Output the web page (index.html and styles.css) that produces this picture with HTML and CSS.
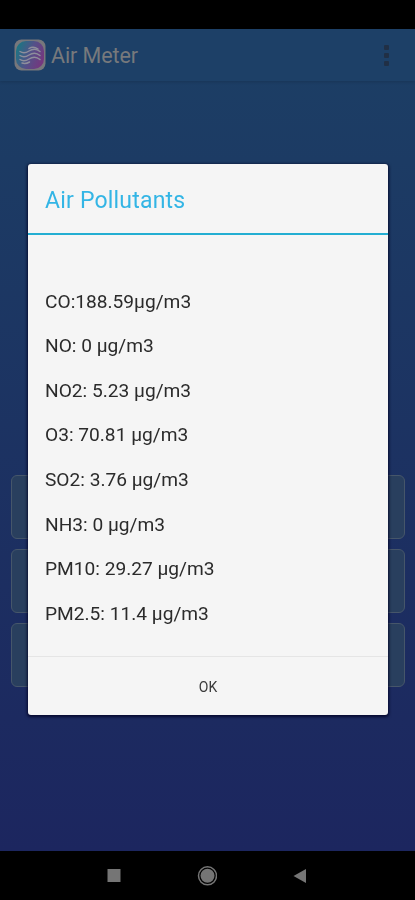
FILE: index.html
```html
<!DOCTYPE html>
<html lang="en">
<head>
    <meta charset="UTF-8">
    <meta name="viewport" content="width=device-width, initial-scale=1.0">
    <title>Air Meter</title>
    <link rel="stylesheet" href="styles.css">
</head>
<body>
    <div class="status-bar"></div>

    <!-- App Screen -->
    <div class="app">
        <header class="app-bar">
            <svg class="logo" viewBox="0 0 32 32">
                <defs>
                    <linearGradient id="logo-fill" x1="0" y1="0.3" x2="1" y2="0.7">
                        <stop offset="0" stop-color="#1c7583"/>
                        <stop offset="0.5" stop-color="#545088"/>
                        <stop offset="1" stop-color="#77357e"/>
                    </linearGradient>
                </defs>
                <rect x="0.5" y="0.5" width="31" height="31" rx="7" fill="#77777c"/>
                <rect x="2" y="2" width="28" height="28" rx="10" fill="url(#logo-fill)"/>
                <g fill="none" stroke="#8e8e9c" stroke-width="1.5" stroke-linecap="round">
                    <path d="M6 12.500c3 2 6 1.500 9-.5s7-3 11 .5"/>
                    <path d="M6 16.500c3 2 6 1.500 9-.5s7-3 11 .5"/>
                    <path d="M6 20.500c3 2 6 1.500 9-.5s7-3 11 .5"/>
                    <path d="M15 9.500c3-2 6-1.500 9 .5"/>
                    <path d="M8 24c3 1 5 .5 7.500-1"/>
                </g>
            </svg>
            <h1>Air Meter</h1>
            <div class="menu-dots"><span></span><span></span><span></span></div>
        </header>
        <main class="cards">
            <div class="card"></div>
            <div class="card"></div>
            <div class="card"></div>
        </main>
    </div>

    <!-- Navigation Bar -->
    <nav class="nav-bar">
        <svg viewBox="0 0 20 20"><rect x="3.500" y="3" width="13" height="13" fill="#757575"/></svg>
        <svg viewBox="0 0 20 20">
            <circle cx="10.500" cy="9.800" r="9" fill="none" stroke="#757575" stroke-width="1.500"/>
            <circle cx="10.500" cy="9.800" r="7" fill="#757575"/>
        </svg>
        <svg viewBox="0 0 20 20"><path d="M3.500 10L16 3v14z" fill="#757575"/></svg>
    </nav>

    <!-- Pollutants Dialog -->
    <div class="overlay">
        <div class="dialog">
            <h2>Air Pollutants</h2>
            <ul class="pollutants">
                <li>CO:188.59µg/m3</li>
                <li>NO: 0 µg/m3</li>
                <li>NO2: 5.23 µg/m3</li>
                <li>O3: 70.81 µg/m3</li>
                <li>SO2: 3.76 µg/m3</li>
                <li>NH3: 0 µg/m3</li>
                <li>PM10: 29.27 µg/m3</li>
                <li>PM2.5: 11.4 µg/m3</li>
            </ul>
            <button class="ok-btn">OK</button>
        </div>
    </div>
</body>
</html>
```
FILE: styles.css
```css
/* Basic Styling */
* { box-sizing: border-box; }
body {
    font-family: Roboto, sans-serif;
    margin: 0;
    height: 900px;
    display: flex;
    flex-direction: column;
    background-color: #000;
}
.status-bar { height: 29px; }
/* App Screen */
.app {
    height: 822px;
    display: flex;
    flex-direction: column;
    justify-content: space-between;
    background: linear-gradient(#1c3f65, #1c265f);
}
.app-bar {
    height: 52px;
    padding: 0 26px 0 14px;
    display: flex;
    align-items: center;
    background-color: #1d4067;
    box-shadow: 0 1px 3px rgba(0, 0, 0, 0.15);
}
.logo { width: 32px; height: 32px; }
.app-bar h1 {
    margin: 0 auto 0 5px;
    padding-top: 1px;
    font-size: 21.5px;
    font-weight: 400;
    letter-spacing: -0.1px;
    color: #77797c;
}
.menu-dots {
    display: flex;
    flex-direction: column;
    gap: 3px;
}
.menu-dots span {
    width: 5px;
    height: 5px;
    border-radius: 1px;
    background-color: #202f45;
}
/* Cards behind the dialog */
.cards {
    padding: 0 10px 164px 11px;
    display: flex;
    flex-direction: column;
    gap: 10px;
}
.card {
    height: 64px;
    border: 1.5px solid #46566a;
    border-radius: 6px;
    background-color: #293f5e;
}
/* Navigation Bar */
.nav-bar {
    height: 49px;
    padding: 0 105px 0 104px;
    display: flex;
    justify-content: space-between;
    align-items: center;
}
.nav-bar svg { width: 20px; height: 20px; }
/* Pollutants Dialog */
.overlay {
    position: fixed;
    inset: 0;
    padding: 164px 27px 0 28px;
}
.dialog {
    height: 551px;
    display: flex;
    flex-direction: column;
    background-color: #f5f5f5;
    border-radius: 3px;
    box-shadow: 0 1px 3px 1px rgba(0, 0, 35, 0.8);
}
.dialog h2 {
    height: 71px;
    margin: 0;
    padding-left: 17px;
    border-bottom: 2px solid #23aed2;
    font-size: 23px;
    font-weight: 400;
    letter-spacing: 0.2px;
    line-height: 73px;
    color: #33b5e5;
}
.pollutants {
    flex: 1;
    margin: 0;
    padding: 44.5px 17px 0;
    list-style: none;
    font-size: 19.15px;
    line-height: 44.64px;
    color: #2b2b2b;
}
.ok-btn {
    height: 59px;
    padding: 2px 0 0;
    border: none;
    border-top: 1px solid #e5e5e5;
    border-radius: 0 0 3px 3px;
    background: none;
    font-family: inherit;
    font-size: 14px;
    color: #3a3a3a;
}
```
